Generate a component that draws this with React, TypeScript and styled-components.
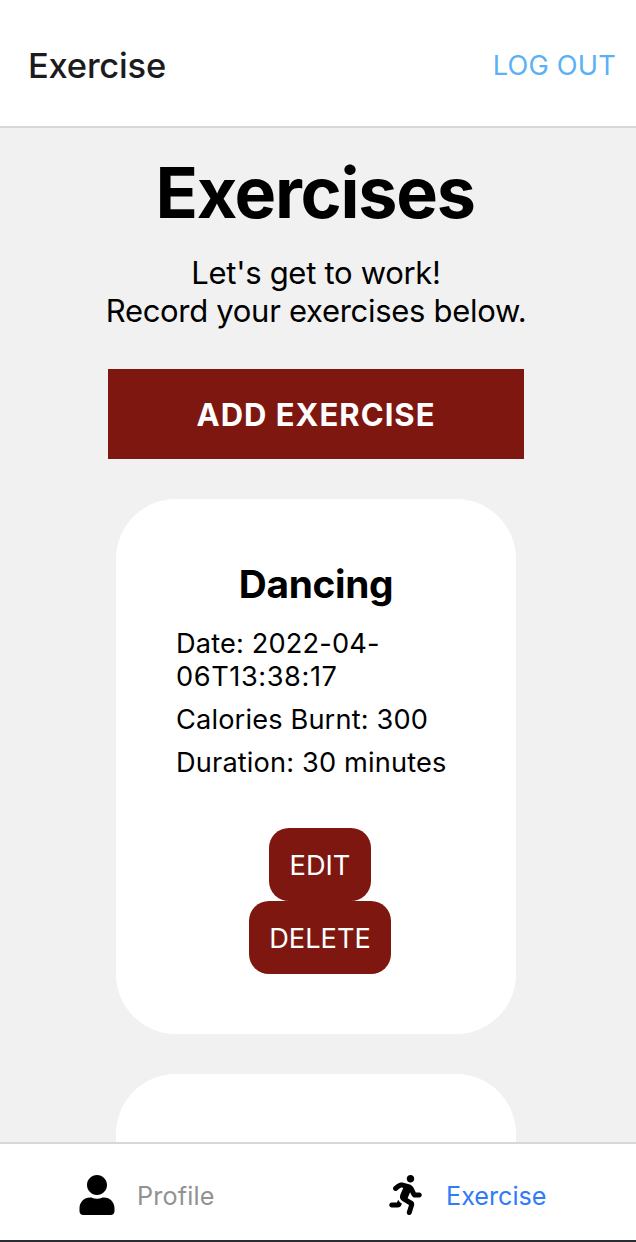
import React from "react";
import styled, { createGlobalStyle } from "styled-components";
import { FaRunning, FaUser } from "react-icons/fa";

const GlobalStyle = createGlobalStyle`
  * { box-sizing: border-box; }
  body { margin: 0; font-family: Inter, "Liberation Sans", sans-serif; }
  h1, h2, p { margin: 0; }
  button { font-family: inherit; border: 0; margin: 0; cursor: pointer; }
`;

const Screen = styled.div`
  display: flex;
  flex-direction: column;
  height: 1242px;
  overflow: hidden;
  background: #f1f1f1;
  color: #000;
`;

const Header = styled.header`
  display: flex;
  flex: none;
  align-items: center;
  justify-content: space-between;
  height: 128px;
  padding: 6px 20px 0 28px;
  background: #fff;
  border-bottom: 2px solid #d8d8d8;
`;

const HeaderTitle = styled.div`
  font-size: 34.5px;
  font-weight: 500;
  line-height: 42px;
  letter-spacing: -0.22px;
  color: #1c1c1e;
`;

const LogOut = styled.button`
  padding: 0;
  background: none;
  color: #5ab1f5;
  font-size: 27.2px;
  line-height: 34px;
  letter-spacing: 0.2px;
`;

const Content = styled.main`
  display: flex;
  flex: 1;
  flex-direction: column;
  align-items: center;
  min-height: 0;
  overflow: hidden;
  padding: 22px 4px 0 0;
`;

const PageTitle = styled.h1`
  margin-left: -2px;
  font-size: 70px;
  font-weight: 700;
  line-height: 86px;
  letter-spacing: -1.25px;
`;

const Intro = styled.p`
  margin-top: 18px;
  font-size: 31px;
  line-height: 38px;
  letter-spacing: -0.3px;
  text-align: center;
`;

const AddButton = styled.button`
  flex: none;
  width: 416px;
  height: 90px;
  margin-top: 39px;
  padding: 0;
  background: #7e170f;
  color: #fff;
  font-size: 31px;
  font-weight: 650;
  letter-spacing: 1px;
`;

const Card = styled.article`
  display: flex;
  flex: none;
  flex-direction: column;
  align-items: center;
  width: 400px;
  height: 535px;
  margin-top: 40px;
  padding: 61px 60px 60px;
  border-radius: 60px;
  background: #fff;
`;

const CardTitle = styled.h2`
  margin-bottom: 19px;
  font-size: 38.8px;
  font-weight: 700;
  line-height: 48px;
  letter-spacing: -0.35px;
`;

const Detail = styled.p`
  width: 280px;
  margin-bottom: 10px;
  font-size: 27.2px;
  line-height: 33px;
  letter-spacing: 0.15px;
`;

const DayAndTime = styled.span`
  letter-spacing: 0.58px;
`;

const Actions = styled.div`
  display: flex;
  flex-direction: column;
  align-items: center;
  margin: 39px 0 0 8px;
`;

const ActionButton = styled.button<{ $width: number }>`
  width: ${({ $width }) => $width}px;
  height: 73px;
  padding: 2px 0 0;
  border-radius: 20px;
  background: #7e170f;
  color: #fff;
  font-size: 27.2px;
`;

const TabBar = styled.nav`
  display: grid;
  flex: none;
  grid-template-columns: 1fr 1fr;
  height: 100px;
  background: #fff;
  border-top: 2px solid #d8d8d8;
  border-bottom: 2px solid #2b2b33;
`;

const Tab = styled.a<{ $active?: boolean }>`
  display: flex;
  align-items: center;
  padding: 5px 0 0 ${({ $active }) => ($active ? 71 : 79)}px;
  gap: ${({ $active }) => ($active ? 24 : 22)}px;
  color: ${({ $active }) => ($active ? "#2f7cf6" : "#929292")};
  letter-spacing: ${({ $active }) => ($active ? 0 : 0.15)}px;

  svg {
    flex: none;
    color: #000;
  }
`;

const TabLabel = styled.span`
  padding-top: 2px;
  font-size: 25.2px;
`;

const exercise = {
  name: "Dancing",
  yearMonth: "2022-04-",
  dayTime: "06T13:38:17",
  calories: 300,
  minutes: 30,
};

export default function App() {
  return (
    <>
      <GlobalStyle />
      <Screen>
        <Header>
          <HeaderTitle>Exercise</HeaderTitle>
          <LogOut>LOG OUT</LogOut>
        </Header>
        <Content>
          <PageTitle>Exercises</PageTitle>
          <Intro>
            Let's get to work!
            <br />
            Record your exercises below.
          </Intro>
          <AddButton>ADD EXERCISE</AddButton>
          <Card>
            <CardTitle>{exercise.name}</CardTitle>
            <Detail>
              {`Date: ${exercise.yearMonth}`}
              <DayAndTime>{exercise.dayTime}</DayAndTime>
            </Detail>
            <Detail>{`Calories Burnt: ${exercise.calories}`}</Detail>
            <Detail>{`Duration: ${exercise.minutes} minutes`}</Detail>
            <Actions>
              <ActionButton $width={102}>EDIT</ActionButton>
              <ActionButton $width={142}>DELETE</ActionButton>
            </Actions>
          </Card>
          <Card />
        </Content>
        <TabBar>
          <Tab>
            <FaUser size={40} style={{ width: 36 }} />
            <TabLabel>Profile</TabLabel>
          </Tab>
          <Tab $active>
            <FaRunning size={40} style={{ width: 33 }} />
            <TabLabel>Exercise</TabLabel>
          </Tab>
        </TabBar>
      </Screen>
    </>
  );
}
